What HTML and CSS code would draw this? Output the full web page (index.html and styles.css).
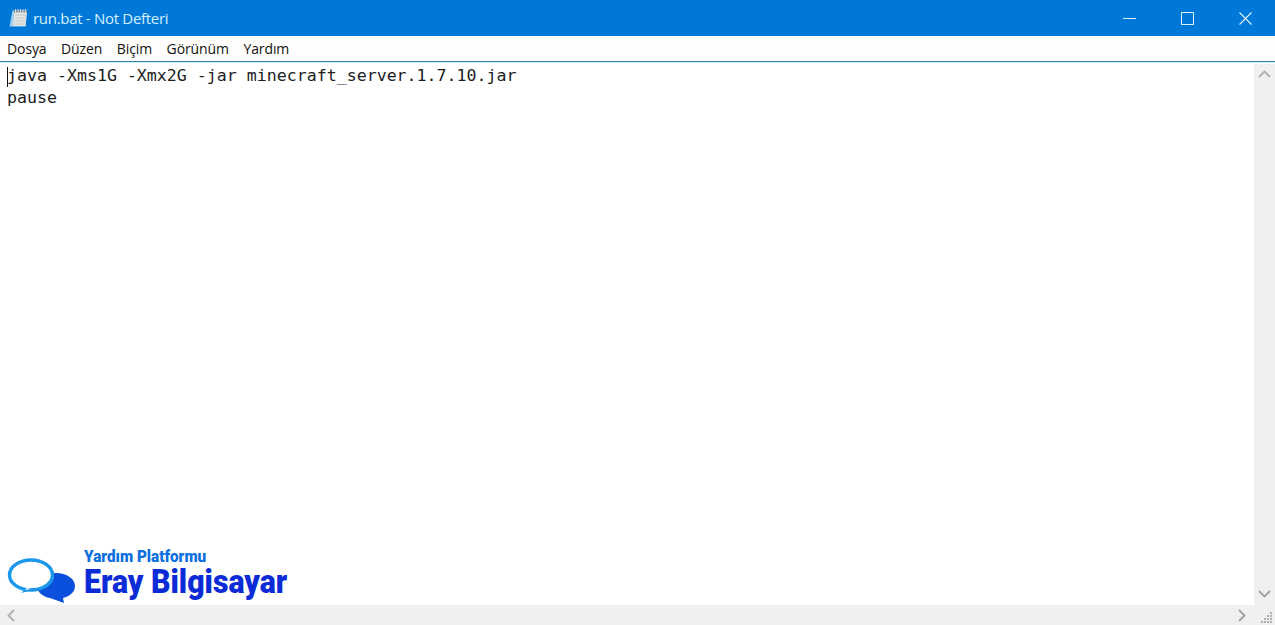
FILE: index.html
```html
<!DOCTYPE html>
<html lang="tr">
<head>
<meta charset="utf-8">
<title>run.bat - Not Defteri</title>
<link rel="stylesheet" href="styles.css">
</head>
<body>
<div class="window">
  <header class="titlebar">
    <svg class="app-icon" width="20" height="20" viewBox="0 0 20 20">
      <path d="M4.500 2.500H19L17.500 18.500H1.500z" fill="#9fd0ea"/>
      <path d="M6.500 3H19L17.500 18H5z" fill="#e3e6e4"/>
      <path d="M7 7h11M6.800 10h11M6.500 13h11M6.200 16h11" stroke="#c4cbcb" stroke-width="1"/>
      <path d="M6 3.500h13" stroke="#7e8a90" stroke-width="2"/>
      <path d="M7.500 1v4M10 1v4M12.500 1v4M15 1v4M17.500 1v4" stroke="#d8dcdc" stroke-width="1"/>
    </svg>
    <span class="title">run.bat - Not Defteri</span>
    <div class="controls">
      <span class="control">
        <svg width="13" height="13" viewBox="0 0 13 13"><path d="M0 6.500h13" stroke="#d8f2ff" stroke-width="1"/></svg>
      </span>
      <span class="control">
        <svg width="13" height="13" viewBox="0 0 13 13"><rect x="0.500" y="0.500" width="12" height="12" fill="none" stroke="#d8f2ff" stroke-width="1"/></svg>
      </span>
      <span class="control">
        <svg width="13" height="13" viewBox="0 0 13 13"><path d="M0.500 0.500l12 12M12.500 0.500l-12 12" stroke="#e2f5ff" stroke-width="1.100"/></svg>
      </span>
    </div>
  </header>
  <nav class="menubar">
    <span>Dosya</span><span>Düzen</span><span>Biçim</span><span>Görünüm</span><span>Yardım</span>
  </nav>
  <main class="client">
    <div class="main-row">
      <div class="editor">
        <pre class="text"><span class="caret"></span>java -Xms1G -Xmx2G -jar minecraft_server.1.7.10.jar
pause</pre>
        <div class="brand">
          <svg class="brand-icon" width="70" height="50" viewBox="0 0 70 50">
            <path d="M44 43c-7-1-13-6-13-12 0-7 8-13 19-13s19 6 19 13c0 6-5 10-12 12l1 5z" fill="#0a50dc"/>
            <path d="M25 4C13 4 3 11 3 20c0 6 5 11 11 14l-1 5 12-3c13 0 23-7 23-16S37 4 25 4z" fill="#fff"/>
            <ellipse cx="25" cy="20" rx="21.500" ry="15" fill="#fff" stroke="#1a96ea" stroke-width="3.400"/>
            <path d="M21 33l-6 5 16-4z" fill="#1a96ea"/>
            <path d="M21 33l-2 2 6-1z" fill="#fff"/>
          </svg>
          <div class="brand-text">
            <span class="brand-sub">Yardım Platformu</span>
            <span class="brand-name">Eray Bilgisayar</span>
          </div>
        </div>
      </div>
      <aside class="vscroll">
        <svg width="13" height="8" viewBox="0 0 13 8"><path d="M1 7l5.500-5.500L12 7" fill="none" stroke="#b0b0b0" stroke-width="1.800"/></svg>
        <svg width="13" height="8" viewBox="0 0 13 8"><path d="M1 1l5.500 5.500L12 1" fill="none" stroke="#a0a0a0" stroke-width="1.800"/></svg>
      </aside>
    </div>
    <div class="hscroll">
      <svg width="8" height="13" viewBox="0 0 8 13"><path d="M7 1L1.500 6.500 7 12" fill="none" stroke="#b0b0b0" stroke-width="1.800"/></svg>
      <svg width="8" height="13" viewBox="0 0 8 13"><path d="M1 1l5.500 5.500L1 12" fill="none" stroke="#a0a0a0" stroke-width="1.800"/></svg>
      <svg class="grip" width="14" height="11" viewBox="0 0 14 11" fill="#b0b0b0">
        <rect x="12" y="0" width="2" height="2"/>
        <rect x="9" y="3" width="2" height="2"/><rect x="12" y="3" width="2" height="2"/>
        <rect x="6" y="6" width="2" height="2"/><rect x="9" y="6" width="2" height="2"/><rect x="12" y="6" width="2" height="2"/>
        <rect x="3" y="9" width="2" height="2"/><rect x="6" y="9" width="2" height="2"/><rect x="9" y="9" width="2" height="2"/><rect x="12" y="9" width="2" height="2"/>
      </svg>
    </div>
  </main>
</div>
</body>
</html>
```

FILE: styles.css
```css
* { box-sizing: border-box; }
html, body { margin: 0; height: 100%; overflow: hidden; background: #fff; }
.window { display: flex; flex-direction: column; width: 1275px; height: 625px; }
.titlebar {
  display: flex; align-items: center; height: 36px; flex: none;
  background: #0078d7; color: #d4f0ff; padding-left: 8px;
  font: 15px "Open Sans", sans-serif;
}
.app-icon { flex: none; margin-right: 5px; }
.title { flex: 1; letter-spacing: -0.3px; }
.controls { display: flex; align-items: center; }
.control { display: flex; justify-content: center; align-items: center; width: 58px; height: 36px; }
.control:last-child { width: 59px; }
.menubar {
  display: flex; gap: 14.500px; align-items: center; height: 26px; flex: none;
  padding: 0 0 1px 7px; background: #fffefc; color: #111;
  border-bottom: 1px solid #2d7fb0;
  font: 14px "Open Sans", sans-serif; letter-spacing: -0.100px;
  box-shadow: 0 1px 0 #d9ecf7;
}
.client { flex: 1; display: flex; flex-direction: column; min-height: 0; }
.main-row { flex: 1; display: flex; min-height: 0; padding-top: 2px; }
.editor { flex: 1; position: relative; background: #fff; }
.text {
  margin: 0; padding: 1px 0 0 7px; color: #1d1d1d;
  font: 16.600px/22px "DejaVu Sans Mono", "Liberation Mono", monospace;
  position: relative;
}
.caret { position: absolute; left: 7px; top: 3px; width: 1px; height: 20px; background: #111; }
.brand { position: absolute; left: 6px; bottom: 0; display: flex; align-items: flex-end; }
.brand-icon { flex: none; }
.brand-text {
  display: flex; flex-direction: column; margin-left: 8px; padding-bottom: 9px;
  font-family: Roboto, sans-serif; font-weight: 900;
}
.brand-sub {
  color: #0a6fe0; font-size: 17px; line-height: 14px; white-space: nowrap; width: 122px;
  transform: scaleX(0.900); transform-origin: left;
}
.brand-name {
  color: #0a2bd6; font-size: 34px; line-height: 30px; margin-top: 3px; white-space: nowrap; width: 203px;
  transform: scaleX(0.890); transform-origin: left;
}
.vscroll {
  width: 21px; flex: none; background: #f0f0f0;
  display: flex; flex-direction: column; justify-content: space-between; align-items: center;
  padding: 6px 0 7px;
}
.hscroll {
  height: 20px; flex: none; background: #f0f0f0; position: relative;
  display: flex; justify-content: space-between; align-items: center;
  padding: 0 29px 0 7px;
}
.grip { position: absolute; right: 3px; bottom: 2px; }
```
